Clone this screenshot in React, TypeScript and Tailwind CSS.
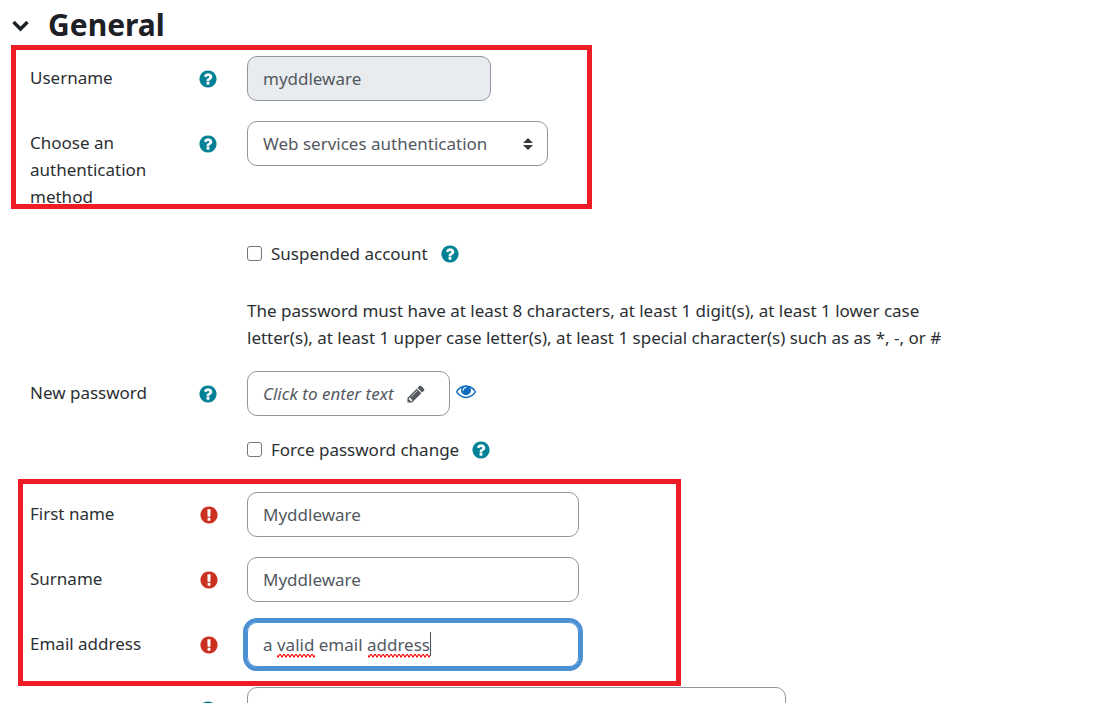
import type { ReactNode } from "react";

const glyphs = {
  help: "M1024 1376v-192q0-14-9-23t-23-9h-192q-14 0-23 9t-9 23v192q0 14 9 23t23 9h192q14 0 23-9t9-23zm256-672q0-88-55.5-163t-138.5-116-170-41q-243 0-371 213-15 24 8 42l132 100q7 6 19 6 16 0 25-12 53-68 86-92 34-24 86-24 48 0 85.5 26t37.5 59q0 38-20 61t-68 45q-63 28-115.5 86.5t-52.5 125.5v36q0 14 9 23t23 9h192q14 0 23-9t9-23q0-19 21.5-49.5t54.5-49.5q32-18 49-28.5t46-35 44.5-48 28-60.5 12.5-81zm384 192q0 209-103 385.5t-279.5 279.5-385.5 103-385.5-103-279.5-279.5-103-385.5 103-385.5 279.5-279.5 385.5-103 385.5 103 279.5 279.5 103 385.5z",
  required:
    "M896 128q209 0 385.5 103t279.5 279.5 103 385.5-103 385.5-279.5 279.5-385.5 103-385.5-103-279.5-279.5-103-385.5 103-385.5 279.5-279.5 385.5-103zm128 1247v-190q0-14-9-23.5t-22-9.5h-192q-13 0-23 10t-10 23v190q0 13 10 23t23 10h192q13 0 22-9.5t9-23.5zm-2-344l18-621q0-12-10-18-10-8-24-8h-220q-14 0-24 8-10 6-10 18l17 621q0 10 10 17.5t24 7.5h185q14 0 23.5-7.5t10.5-17.5z",
  pencil:
    "M491 1536l91-91-235-235-91 91v107h128v128h107zm523-928q0-22-22-22-10 0-17 7l-542 542q-7 7-7 17 0 22 22 22 10 0 17-7l542-542q7-7 7-17zm-54-192l416 416-832 832h-416v-416zm683 96q0 53-37 90l-166 166-416-416 166-165q36-38 90-38 53 0 91 38l235 234q37 39 37 91z",
  eye: "M1664 960q-152-236-381-353 61 104 61 225 0 185-131.5 316.5t-316.5 131.5-316.5-131.5-131.5-316.5q0-121 61-225-229 117-381 353 133 205 333.5 326.5t434.5 121.5 434.5-121.5 333.5-326.5zm-720-384q0-20-14-34t-34-14q-125 0-214.5 89.5t-89.5 214.5q0 20 14 34t34 14 34-14 14-34q0-86 61-147t147-61q20 0 34-14t14-34zm848 384q0 34-20 69-140 230-376.5 368.5t-499.5 138.5-499.5-139-376.5-368q-20-35-20-69t20-69q140-229 376.5-368t499.5-139 499.5 139 376.5 368q20 35 20 69z",
};

function Glyph({ name }: { name: keyof typeof glyphs }) {
  return (
    <svg viewBox="0 0 1792 1792" className="size-5 shrink-0 fill-current" aria-hidden="true">
      <path d={glyphs[name]} />
    </svg>
  );
}

function HelpButton({ topic }: { topic: string }) {
  return (
    <button type="button" aria-label={`Help with ${topic}`} className="block text-[#008196]">
      <Glyph name="help" />
    </button>
  );
}

function RequiredMark() {
  return (
    <span role="img" aria-label="Required" className="ml-px block text-[#ca3120]">
      <Glyph name="required" />
    </span>
  );
}

const field = "h-[45px] max-w-full rounded-[10px] border px-[15px] text-[#53595f] outline-none";

function Row({ label, htmlFor, mark, children }: { label?: string; htmlFor?: string; mark?: ReactNode; children: ReactNode }) {
  return (
    <div className="grid grid-cols-[168px_49px_minmax(0,1fr)]">
      <div className="pt-2 pr-8">{label && <label htmlFor={htmlFor}>{label}</label>}</div>
      <div className="pt-[13px]">{mark}</div>
      <div className="min-w-0">{children}</div>
    </div>
  );
}

function CheckRow({ id, label }: { id: string; label: string }) {
  return (
    <div className="flex items-center">
      <input id={id} type="checkbox" className="mr-[9px] size-[15px] appearance-none rounded-[3px] border border-[#767676] bg-white" />
      <label htmlFor={id}>{label}</label>
      <span className="ml-3">
        <HelpButton topic={label} />
      </span>
    </div>
  );
}

function Squiggle({ className }: { className: string }) {
  return (
    <svg className={`pointer-events-none absolute h-[4px] ${className}`} aria-hidden="true">
      <defs>
        <pattern id="wave" width="4" height="4" patternUnits="userSpaceOnUse">
          <path d="M-1 0L1 3L3 0L5 3" fill="none" stroke="#f00" strokeWidth="1.1" />
        </pattern>
      </defs>
      <rect width="100%" height="4" fill="url(#wave)" />
    </svg>
  );
}

export default function App() {
  return (
    <main className="overflow-hidden bg-white pt-1 font-['Noto_Sans',sans-serif] text-[17px] leading-[27px] text-[#2b2f33]">
      <h2 className="flex h-11 items-start pl-3 text-[30px] leading-[42px] font-bold text-[#1d2125]">
        <button type="button" aria-label="Collapse General" className="mt-4 mr-[19px] block">
          <svg viewBox="0 0 17 12" className="h-3 w-[17px]" fill="none" stroke="currentColor" strokeWidth="3.4" aria-hidden="true">
            <path d="M1.5 2L8.5 9L15.5 2" />
          </svg>
        </button>
        General
      </h2>

      <form className="pt-2 pl-[30px]">
        <section className="relative flex flex-col gap-5">
          <Row label="Username" htmlFor="username" mark={<HelpButton topic="Username" />}>
            <input id="username" readOnly defaultValue="myddleware" className={`${field} w-[244px] border-[#8f959e] bg-[#e9ecef]`} />
          </Row>
          <Row label="Choose an authentication method" htmlFor="auth" mark={<HelpButton topic="authentication method" />}>
            <div className="relative w-[301px] max-w-full">
              <select id="auth" className={`${field} w-full appearance-none border-[#8f959e] bg-white`}>
                <option>Web services authentication</option>
              </select>
              <svg viewBox="0 0 10 12" className="pointer-events-none absolute top-[17px] right-[15px] h-3 w-[10px] fill-[#343a40]" aria-hidden="true">
                <path d="M5 0L10 5H0zM5 12L0 7H10z" />
              </svg>
            </div>
          </Row>
          <div className="pointer-events-none absolute -top-[11px] bottom-px -left-[19px] w-[581px] border-[5px] border-[#ee1c25]" />
        </section>

        <div className="pt-[30px]">
          <Row>
            <CheckRow id="suspended" label="Suspended account" />
          </Row>
        </div>

        <div className="pt-[30px]">
          <Row>
            <p className="max-w-[715px]">
              The password must have at least 8 characters, at least 1 digit(s), at least 1 lower case letter(s), at least 1 upper case
              letter(s), at least 1 special character(s) such as as *, -, or #
            </p>
          </Row>
        </div>

        <div className="pt-5">
          <Row label="New password" htmlFor="password" mark={<HelpButton topic="New password" />}>
            <div className="flex items-start gap-[6px]">
              <button id="password" type="button" className={`${field} flex w-[203px] items-center gap-3 border-[#8f959e] italic`}>
                Click to enter text
                <Glyph name="pencil" />
              </button>
              <button type="button" aria-label="Reveal" className="mt-[10px] block text-[#0f6cbf]">
                <Glyph name="eye" />
              </button>
            </div>
          </Row>
        </div>

        <div className="pt-5">
          <Row>
            <CheckRow id="force" label="Force password change" />
          </Row>
        </div>

        <section className="relative mt-[29px] flex flex-col gap-5">
          <Row label="First name" htmlFor="first" mark={<RequiredMark />}>
            <input id="first" defaultValue="Myddleware" className={`${field} w-[332px] border-[#8f959e]`} />
          </Row>
          <Row label="Surname" htmlFor="surname" mark={<RequiredMark />}>
            <input id="surname" defaultValue="Myddleware" className={`${field} w-[332px] border-[#8f959e]`} />
          </Row>
          <Row label="Email address" htmlFor="email" mark={<RequiredMark />}>
            <div className="relative w-[332px] max-w-full">
              <input id="email" defaultValue="a valid email address" className={`${field} w-full border-[#4a90d2] ring-4 ring-[#4a90d2]`} />
              <Squiggle className="top-[32px] left-[30px] w-[38px]" />
              <Squiggle className="top-[32px] left-[121px] w-[62px]" />
              <span className="pointer-events-none absolute top-[10px] left-[183px] h-6 w-px bg-[#495057]" />
            </div>
          </Row>
          <div className="pointer-events-none absolute -top-[13px] -bottom-[19px] -left-[12px] w-[663px] border-[5px] border-[#ee1c25]" />
        </section>

        <div className="mt-5 h-4 overflow-hidden">
          <Row mark={<HelpButton topic="email visibility" />}>
            <select aria-label="Email visibility" className={`${field} w-[539px] appearance-none border-[#8f959e] bg-white`} />
          </Row>
        </div>
      </form>
    </main>
  );
}
